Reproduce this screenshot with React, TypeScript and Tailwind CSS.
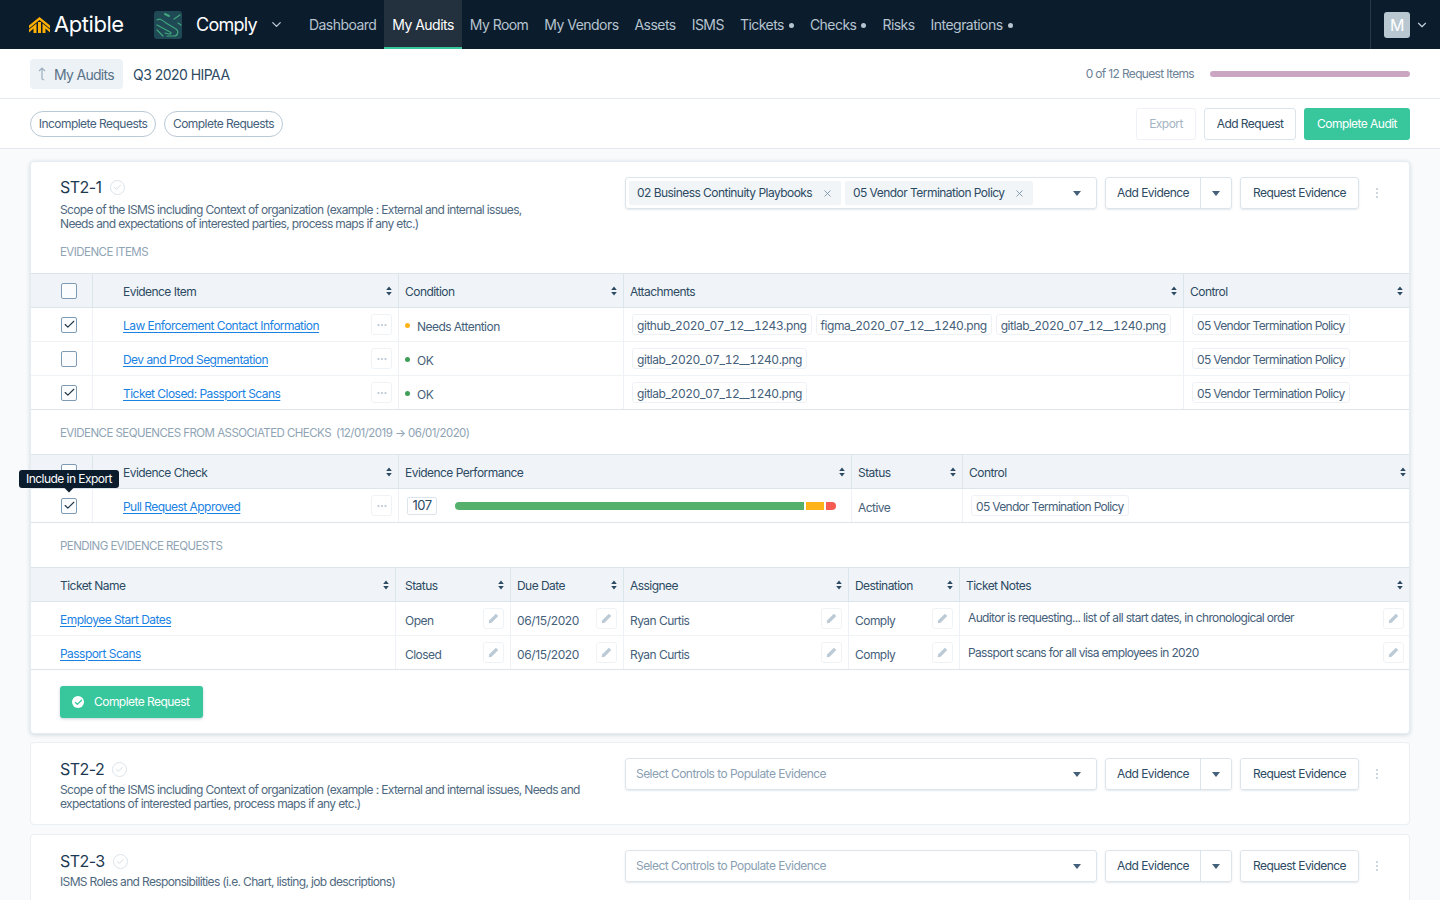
import { ChevronDown, Check, X, MoreHorizontal } from 'lucide-react';

const nav = [
  { label: 'Dashboard' },
  { label: 'My Audits', active: true },
  { label: 'My Room' },
  { label: 'My Vendors' },
  { label: 'Assets' },
  { label: 'ISMS' },
  { label: 'Tickets', dot: true },
  { label: 'Checks', dot: true },
  { label: 'Risks' },
  { label: 'Integrations', dot: true },
];

const evidence = [
  {
    name: 'Law Enforcement Contact Information',
    checked: true,
    condition: 'Needs Attention',
    dot: 'bg-[#ffb31a]',
    files: ['github_2020_07_12__1243.png', 'figma_2020_07_12__1240.png', 'gitlab_2020_07_12__1240.png'],
  },
  { name: 'Dev and Prod Segmentation', checked: false, condition: 'OK', dot: 'bg-[#3f9f57]', files: ['gitlab_2020_07_12__1240.png'] },
  { name: 'Ticket Closed: Passport Scans', checked: true, condition: 'OK', dot: 'bg-[#3f9f57]', files: ['gitlab_2020_07_12__1240.png'] },
];

const tickets = [
  { name: 'Employee Start Dates', status: 'Open', note: 'Auditor is requesting... list of all start dates, in chronological order', noteClass: 'pb-[1px]' },
  { name: 'Passport Scans', status: 'Closed', note: 'Passport scans for all visa employees in 2020', noteClass: 'pt-[1px]' },
];

function Sort() {
  return (
    <svg width="6" height="10" viewBox="0 0 6 10" className="shrink-0 text-[#2d4a63]" fill="currentColor">
      <path d="M3 0.5 L5.8 4 H0.2 Z M3 9.5 L0.2 6 H5.8 Z" />
    </svg>
  );
}

function Caret() {
  return (
    <svg width="8" height="5" viewBox="0 0 8 5" className="shrink-0 text-[#45607a]" fill="currentColor">
      <path d="M0 0 H8 L4 5 Z" />
    </svg>
  );
}

function CheckBox({ checked }: { checked?: boolean }) {
  return (
    <span className="flex h-4 w-4 items-center justify-center rounded-[2px] border border-[#7f9bb4] bg-[#fbfcfd]">
      {checked && <Check size={13} strokeWidth={2} className="text-[#1d3347]" />}
    </span>
  );
}

function Head({ label, left, pad = 'pl-[6px]', pr = 'pr-[6px]' }: { label?: string; left?: boolean; pad?: string; pr?: string }) {
  return (
    <div className={`flex items-center justify-between ${pr} ${pad} ${left ? 'border-l border-[#dde5ec]' : ''}`}>
      <span className="pt-[3px] text-[#2d4a63]">{label}</span>
      <Sort />
    </div>
  );
}

function IconBtn({ pencil }: { pencil?: boolean }) {
  return (
    <span className="flex h-[21px] w-[21px] shrink-0 items-center justify-center rounded-[3px] border border-[#f0f3f6] bg-white">
      {pencil ? (
        <svg width="11" height="11" viewBox="0 0 12 12" fill="#bccad6">
          <path d="M8.6 0.8 L11.2 3.4 L4 10.6 L0.8 11.2 L1.4 8 Z" />
        </svg>
      ) : (
        <MoreHorizontal size={12} strokeWidth={2.5} className="text-[#bccad6]" />
      )}
    </span>
  );
}

function Chip({ children, mono }: { children: string; mono?: boolean }) {
  return (
    <span
      className={`flex h-[21px] items-center whitespace-nowrap rounded-[3px] border border-[#eef2f6] px-1 pt-[3px] text-[#45607a] ${mono ? 'tabular-nums tracking-[-0.037em]' : 'tracking-[-0.057em]'}`}
    >
      {children}
    </span>
  );
}

function SectionLabel({ children, className }: { children: React.ReactNode; className: string }) {
  return <div className={`pl-[29px] text-[11.5px] text-[#8fa4b5] ${className}`}>{children}</div>;
}

function Controls({ selected }: { selected?: string[] }) {
  return (
    <div className="flex items-start gap-2">
      <div className="flex h-8 w-[472px] items-center justify-between rounded-[3px] border border-[#dde5ec] pl-[3px] pr-[15px] shadow-[0_1px_2px_rgba(40,70,100,0.12)]">
        {selected ? (
          <div className="flex gap-1">
            {selected.map((s, i) => (
              <span
                key={s}
                className={`flex h-6 items-center justify-between whitespace-nowrap rounded-[2px] bg-[#f1f5f8] pl-2 pr-[8px] text-[#2d4a63] ${i === 0 ? 'w-[212px]' : 'w-[188px]'}`}
              >
                <span>{s}</span>
                <X size={11} strokeWidth={2} className="text-[#7f95a8]" />
              </span>
            ))}
          </div>
        ) : (
          <span className="pl-[7px] text-[#8aa0b3]">Select Controls to Populate Evidence</span>
        )}
        <Caret />
      </div>
      <div className="flex h-8 w-[127px] items-center rounded-[3px] border border-[#dde5ec] text-[#2d4a63] shadow-[0_1px_2px_rgba(40,70,100,0.12)]">
        <span className="flex h-full w-[95px] items-center justify-center border-r border-[#dde5ec]">Add Evidence</span>
        <span className="flex flex-1 justify-center">
          <Caret />
        </span>
      </div>
      <div className="flex h-8 w-[119px] items-center justify-center rounded-[3px] border border-[#dde5ec] text-[#2d4a63] shadow-[0_1px_2px_rgba(40,70,100,0.12)]">
        Request Evidence
      </div>
      <span className="flex h-8 w-[20px] flex-col items-center justify-center gap-[2px]">
        <span className="h-[2px] w-[2px] rounded-full bg-[#bccad6]" />
        <span className="h-[2px] w-[2px] rounded-full bg-[#bccad6]" />
        <span className="h-[2px] w-[2px] rounded-full bg-[#bccad6]" />
      </span>
    </div>
  );
}

function Title({ children }: { children: string }) {
  return (
    <div className="flex items-center gap-2 text-[16px] leading-5 text-[#1d3a52]">
      {children}
      <span className="flex h-[15px] w-[15px] items-center justify-center rounded-full border border-[#dbe4eb]">
        <Check size={9} className="text-[#c8d4de]" />
      </span>
    </div>
  );
}

function MiniCard({ title, lines, h }: { title: string; lines: string[]; h: string }) {
  return (
    <section className={`flex rounded-[4px] border border-[#eaeff4] bg-white ${h}`}>
      <div className="w-[594px] shrink-0 pl-[29px] pt-4">
        <Title>{title}</Title>
        <p className="mt-[4px] leading-[14px] tracking-[-0.054em] text-[#4f6980]">
          {lines.map((l) => (
            <span key={l} className="block whitespace-nowrap">
              {l}
            </span>
          ))}
        </p>
      </div>
      <div className="pt-[15px]">
        <Controls />
      </div>
    </section>
  );
}

export default function App() {
  return (
    <div className="h-[900px] overflow-hidden bg-[#f8fafb] font-['Inter',sans-serif] text-[12px] tracking-[-0.045em] text-[#45607a]">
      {/* Top nav */}
      <header className="flex h-[49px] items-center bg-[#0b1c2d] pl-[29px]">
        <svg width="21" height="16" viewBox="0 0 21 16" className="shrink-0" fill="#ffb000">
          <path d="M10.5 0 L21 8.5 V11.5 L10.5 3 L0 11.5 V8.5 Z" />
          <path d="M9 5 H12 V16 H9 Z" />
          <path d="M7.5 6.5 V16 H4.5 V11.5 L0 15.5 V12.5 Z" />
          <path d="M13.5 6.5 V16 H16.5 V11.5 L21 15.5 V12.5 Z" />
        </svg>
        <span className="ml-1 w-[100px] text-[22px] tracking-[-0.02em] text-white">Aptible</span>
        <svg width="28" height="28" viewBox="0 0 28 28" className="shrink-0" fill="none" stroke="#41a57c" strokeWidth="1.2" strokeLinecap="round">
          <rect width="28" height="28" rx="3" fill="#1f4a55" stroke="none" />
          <path d="M11 3 L15 5" strokeWidth="2" />
          <path d="M26 4 L20 8 M24 12 L27 14" />
          <path d="M3 9 C6 7 8 9 12 12 L22 18 C25 20 24 25 20 25 L13 25" />
          <path d="M3 14 L16 21 C18 22 17 23 15 23 L11 22" />
          <path d="M3 19 L9 25" />
        </svg>
        <span className="ml-[14px] text-[18px] tracking-[-0.04em] text-white">Comply</span>
        <ChevronDown size={15} className="ml-[12px] text-[#c3d0da]" />
        <nav className="ml-[17px] flex h-full text-[14px] text-[#b6c4cf]">
          {nav.map((n) => (
            <span
              key={n.label}
              className={`flex h-full items-center px-2 ${n.active ? 'border-b-2 border-[#38c79d] bg-[#23313f] pt-[2px] text-white' : ''}`}
            >
              {n.label}
              {n.dot && <span className="ml-[5px] mt-[2px] h-[5px] w-[5px] rounded-full bg-[#b6c4cf]" />}
            </span>
          ))}
        </nav>
        <div className="ml-auto flex h-full items-center border-l border-[#24384c] pl-[13px] pr-[11px]">
          <span className="flex h-[26px] w-[26px] items-center justify-center rounded-[3px] bg-[#b9c7d1] text-[16px] text-white">M</span>
          <ChevronDown size={14} className="ml-[5px] text-[#c3d0da]" />
        </div>
      </header>

      {/* Breadcrumb */}
      <div className="flex h-[50px] items-center border-b border-[#e3e9ef] bg-white px-[30px]">
        <span className="flex h-[30px] w-[93px] items-center rounded-[4px] bg-[#edf2f7] pl-2 text-[14px] tracking-[-0.05em] text-[#5a7389]">
          <svg width="8" height="14" viewBox="0 0 8 14" fill="none" stroke="#9db0c0" strokeWidth="1.2" className="mr-2 shrink-0">
            <path d="M1 4 L4 1 L7 4 M4 1 V12 L6 13" />
          </svg>
          <span className="pt-[2px]">My Audits</span>
        </span>
        <span className="ml-[10px] pt-[2px] text-[14px] text-[#2d4a63]">Q3 2020 HIPAA</span>
        <span className="ml-auto tracking-[-0.055em] text-[#6c8296]">0 of 12 Request Items</span>
        <span className="ml-4 h-[6px] w-[200px] rounded-full bg-[#cba6c3]" />
      </div>

      {/* Filters */}
      <div className="flex h-[50px] items-center border-b border-[#e3e9ef] bg-white px-[30px]">
        <span className="flex h-[26px] w-[126px] items-center justify-center rounded-full border border-[#b9c9d6] pt-[1px]">Incomplete Requests</span>
        <span className="ml-2 flex h-[26px] w-[119px] items-center justify-center rounded-full border border-[#b9c9d6] pt-[1px]">Complete Requests</span>
        <span className="ml-auto flex h-8 w-[60px] items-center justify-center rounded-[3px] border border-[#eef2f6] pt-[1px] text-[#a4b4c2]">Export</span>
        <span className="ml-2 flex h-8 w-[92px] items-center justify-center rounded-[3px] border border-[#dde5ec] pt-[1px] text-[#2d4a63]">Add Request</span>
        <span className="ml-2 flex h-8 w-[106px] items-center justify-center rounded-[3px] bg-[#38c79d] pt-[1px] text-white">Complete Audit</span>
      </div>

      <main className="flex flex-col gap-2 px-[30px] pt-3">
        {/* Main card */}
        <section className="h-[573px] rounded-[4px] border border-[#e6ecf1] bg-white shadow-[0_1px_4px_rgba(40,70,100,0.18)]">
          <div className="flex h-[111px]">
            <div className="w-[594px] shrink-0 pl-[29px] pt-[15px]">
              <Title>ST2-1</Title>
              <p className="mt-[6px] leading-[14px] tracking-[-0.054em] text-[#4f6980]">
                Scope of the ISMS including Context of organization (example : External and internal issues,
                <br />
                Needs and expectations of interested parties, process maps if any etc.)
              </p>
              <div className="mt-[13px] text-[11.5px] text-[#8fa4b5]">EVIDENCE ITEMS</div>
            </div>
            <div className="pt-[15px]">
              <Controls selected={['02 Business Continuity Playbooks', '05 Vendor Termination Policy']} />
            </div>
          </div>

          {/* Evidence items */}
          <div className="grid h-[35px] grid-cols-[61px_306px_225px_560px_1fr] border-y border-[#dde5ec] bg-[#f0f4f8]">
            <div className="flex items-center pl-[30px]">
              <CheckBox />
            </div>
            <Head label="Evidence Item" left pad="pl-[30px]" />
            <Head label="Condition" left />
            <Head label="Attachments" left />
            <Head label="Control" left />
          </div>
          {evidence.map((row, i) => (
            <div
              key={row.name}
              className={`grid h-[34px] grid-cols-[61px_306px_225px_560px_1fr] border-b ${i === 2 ? 'border-[#dde5ec]' : 'border-[#f0f3f6]'}`}
            >
              <div className="flex items-center pl-[30px]">
                <CheckBox checked={row.checked} />
              </div>
              <div className="flex items-center justify-between border-l border-[#eef2f6] pl-[30px] pr-[6px]">
                <a className="mt-[2px] text-[#1a82e2] underline underline-offset-2">{row.name}</a>
                <IconBtn />
              </div>
              <div className="flex items-center border-l border-[#eef2f6] pl-[6px] pt-[2px]">
                <span className={`mr-[7px] h-[5px] w-[5px] rounded-full ${row.dot}`} />
                <span className="pt-[3px]">{row.condition}</span>
              </div>
              <div className="flex items-center gap-[4px] border-l border-[#eef2f6] pl-2">
                {row.files.map((f) => (
                  <Chip key={f} mono>
                    {f}
                  </Chip>
                ))}
              </div>
              <div className="flex items-center border-l border-[#eef2f6] pl-2">
                <Chip>05 Vendor Termination Policy</Chip>
              </div>
            </div>
          ))}

          <SectionLabel className="flex h-[44px] items-center pt-[3px]">
            EVIDENCE SEQUENCES FROM ASSOCIATED CHECKS
            <span className="ml-[5px]">(12/01/2019 → 06/01/2020)</span>
          </SectionLabel>

          {/* Evidence checks */}
          <div className="grid h-[35px] grid-cols-[61px_306px_453px_111px_1fr] border-y border-[#dde5ec] bg-[#f0f4f8]">
            <div className="flex items-center pl-[30px]">
              <CheckBox />
            </div>
            <Head label="Evidence Check" left pad="pl-[30px]" />
            <Head label="Evidence Performance" left />
            <Head label="Status" left />
            <Head label="Control" left pr="pr-[3px]" />
          </div>
          <div className="grid h-[34px] grid-cols-[61px_306px_453px_111px_1fr] border-b border-[#dde5ec]">
            <div className="relative flex items-center pl-[30px]">
              <CheckBox checked />
              <span className="absolute left-[-12px] top-[-19px] z-10 flex h-[18px] w-[100px] items-center justify-center rounded-[3px] bg-[#0b1c2d] text-white">
                Include in Export
                <span className="absolute bottom-[-3px] left-1/2 h-[7px] w-[7px] -translate-x-1/2 rotate-45 bg-[#0b1c2d]" />
              </span>
            </div>
            <div className="flex items-center justify-between border-l border-[#eef2f6] pl-[30px] pr-[6px]">
              <a className="mt-[2px] text-[#1a82e2] underline underline-offset-2">Pull Request Approved</a>
              <IconBtn />
            </div>
            <div className="flex items-center border-l border-[#eef2f6] pl-2">
              <span className="flex h-[18px] w-[30px] items-center justify-center rounded-[2px] border border-[#dde5ec] text-[13px] text-[#2d4a63]">107</span>
              <span className="ml-[18px] h-2 w-[349px] rounded-l-full bg-[#54b06b]" />
              <span className="ml-[2px] h-2 w-[18px] bg-[#ffb31a]" />
              <span className="ml-[2px] h-2 w-[10px] rounded-r-full bg-[#f65c52]" />
            </div>
            <div className="flex items-center border-l border-[#eef2f6] pl-[6px] pt-[5px]">Active</div>
            <div className="flex items-center border-l border-[#eef2f6] pl-2">
              <Chip>05 Vendor Termination Policy</Chip>
            </div>
          </div>

          <SectionLabel className="flex h-[44px] items-center pt-[3px]">PENDING EVIDENCE REQUESTS</SectionLabel>

          {/* Pending requests */}
          <div className="grid h-[35px] grid-cols-[364px_115px_113px_225px_111px_1fr] border-y border-[#dde5ec] bg-[#f0f4f8]">
            <Head label="Ticket Name" pad="pl-[29px]" />
            <Head label="Status" left pad="pl-[9px]" />
            <Head label="Due Date" left />
            <Head label="Assignee" left />
            <Head label="Destination" left />
            <Head label="Ticket Notes" left />
          </div>
          {tickets.map((t, i) => (
            <div
              key={t.name}
              className={`grid h-[34px] grid-cols-[364px_115px_113px_225px_111px_1fr] border-b ${i === 1 ? 'border-[#dde5ec]' : 'border-[#f0f3f6]'}`}
            >
              <div className="flex items-center pl-[29px]">
                <a className="mt-[2px] text-[#1a82e2] underline underline-offset-2">{t.name}</a>
              </div>
              {[t.status, '06/15/2020', 'Ryan Curtis', 'Comply'].map((v, j) => (
                <div key={j} className={`flex items-center justify-between border-l border-[#eef2f6] pr-[6px] ${j === 0 ? 'pl-[9px]' : 'pl-[6px]'}`}>
                  <span className={`pt-[4px] ${j === 1 ? 'tracking-[-0.03em]' : ''}`}>{v}</span>
                  <IconBtn pencil />
                </div>
              ))}
              <div className="flex items-center justify-between border-l border-[#eef2f6] pl-2 pr-[5px]">
                <span className={`tracking-[-0.054em] ${t.noteClass}`}>{t.note}</span>
                <IconBtn pencil />
              </div>
            </div>
          ))}

          <div className="pl-[29px] pt-4">
            <span className="flex h-8 w-[143px] items-center rounded-[3px] bg-[#38c79d] pl-3 text-white shadow-[0_1px_3px_rgba(40,70,100,0.25)]">
              <span className="mr-[10px] flex h-3 w-3 items-center justify-center rounded-full bg-white">
                <Check size={9} strokeWidth={3.5} className="text-[#38c79d]" />
              </span>
              Complete Request
            </span>
          </div>
        </section>

        <MiniCard
          title="ST2-2"
          h="h-[83px]"
          lines={[
            'Scope of the ISMS including Context of organization (example : External and internal issues, Needs and',
            'expectations of interested parties, process maps if any etc.)',
          ]}
        />
        <div className="mt-[1px]">
          <MiniCard title="ST2-3" h="h-[90px]" lines={['ISMS Roles and Responsibilities (i.e. Chart, listing, job descriptions)']} />
        </div>
      </main>
    </div>
  );
}
